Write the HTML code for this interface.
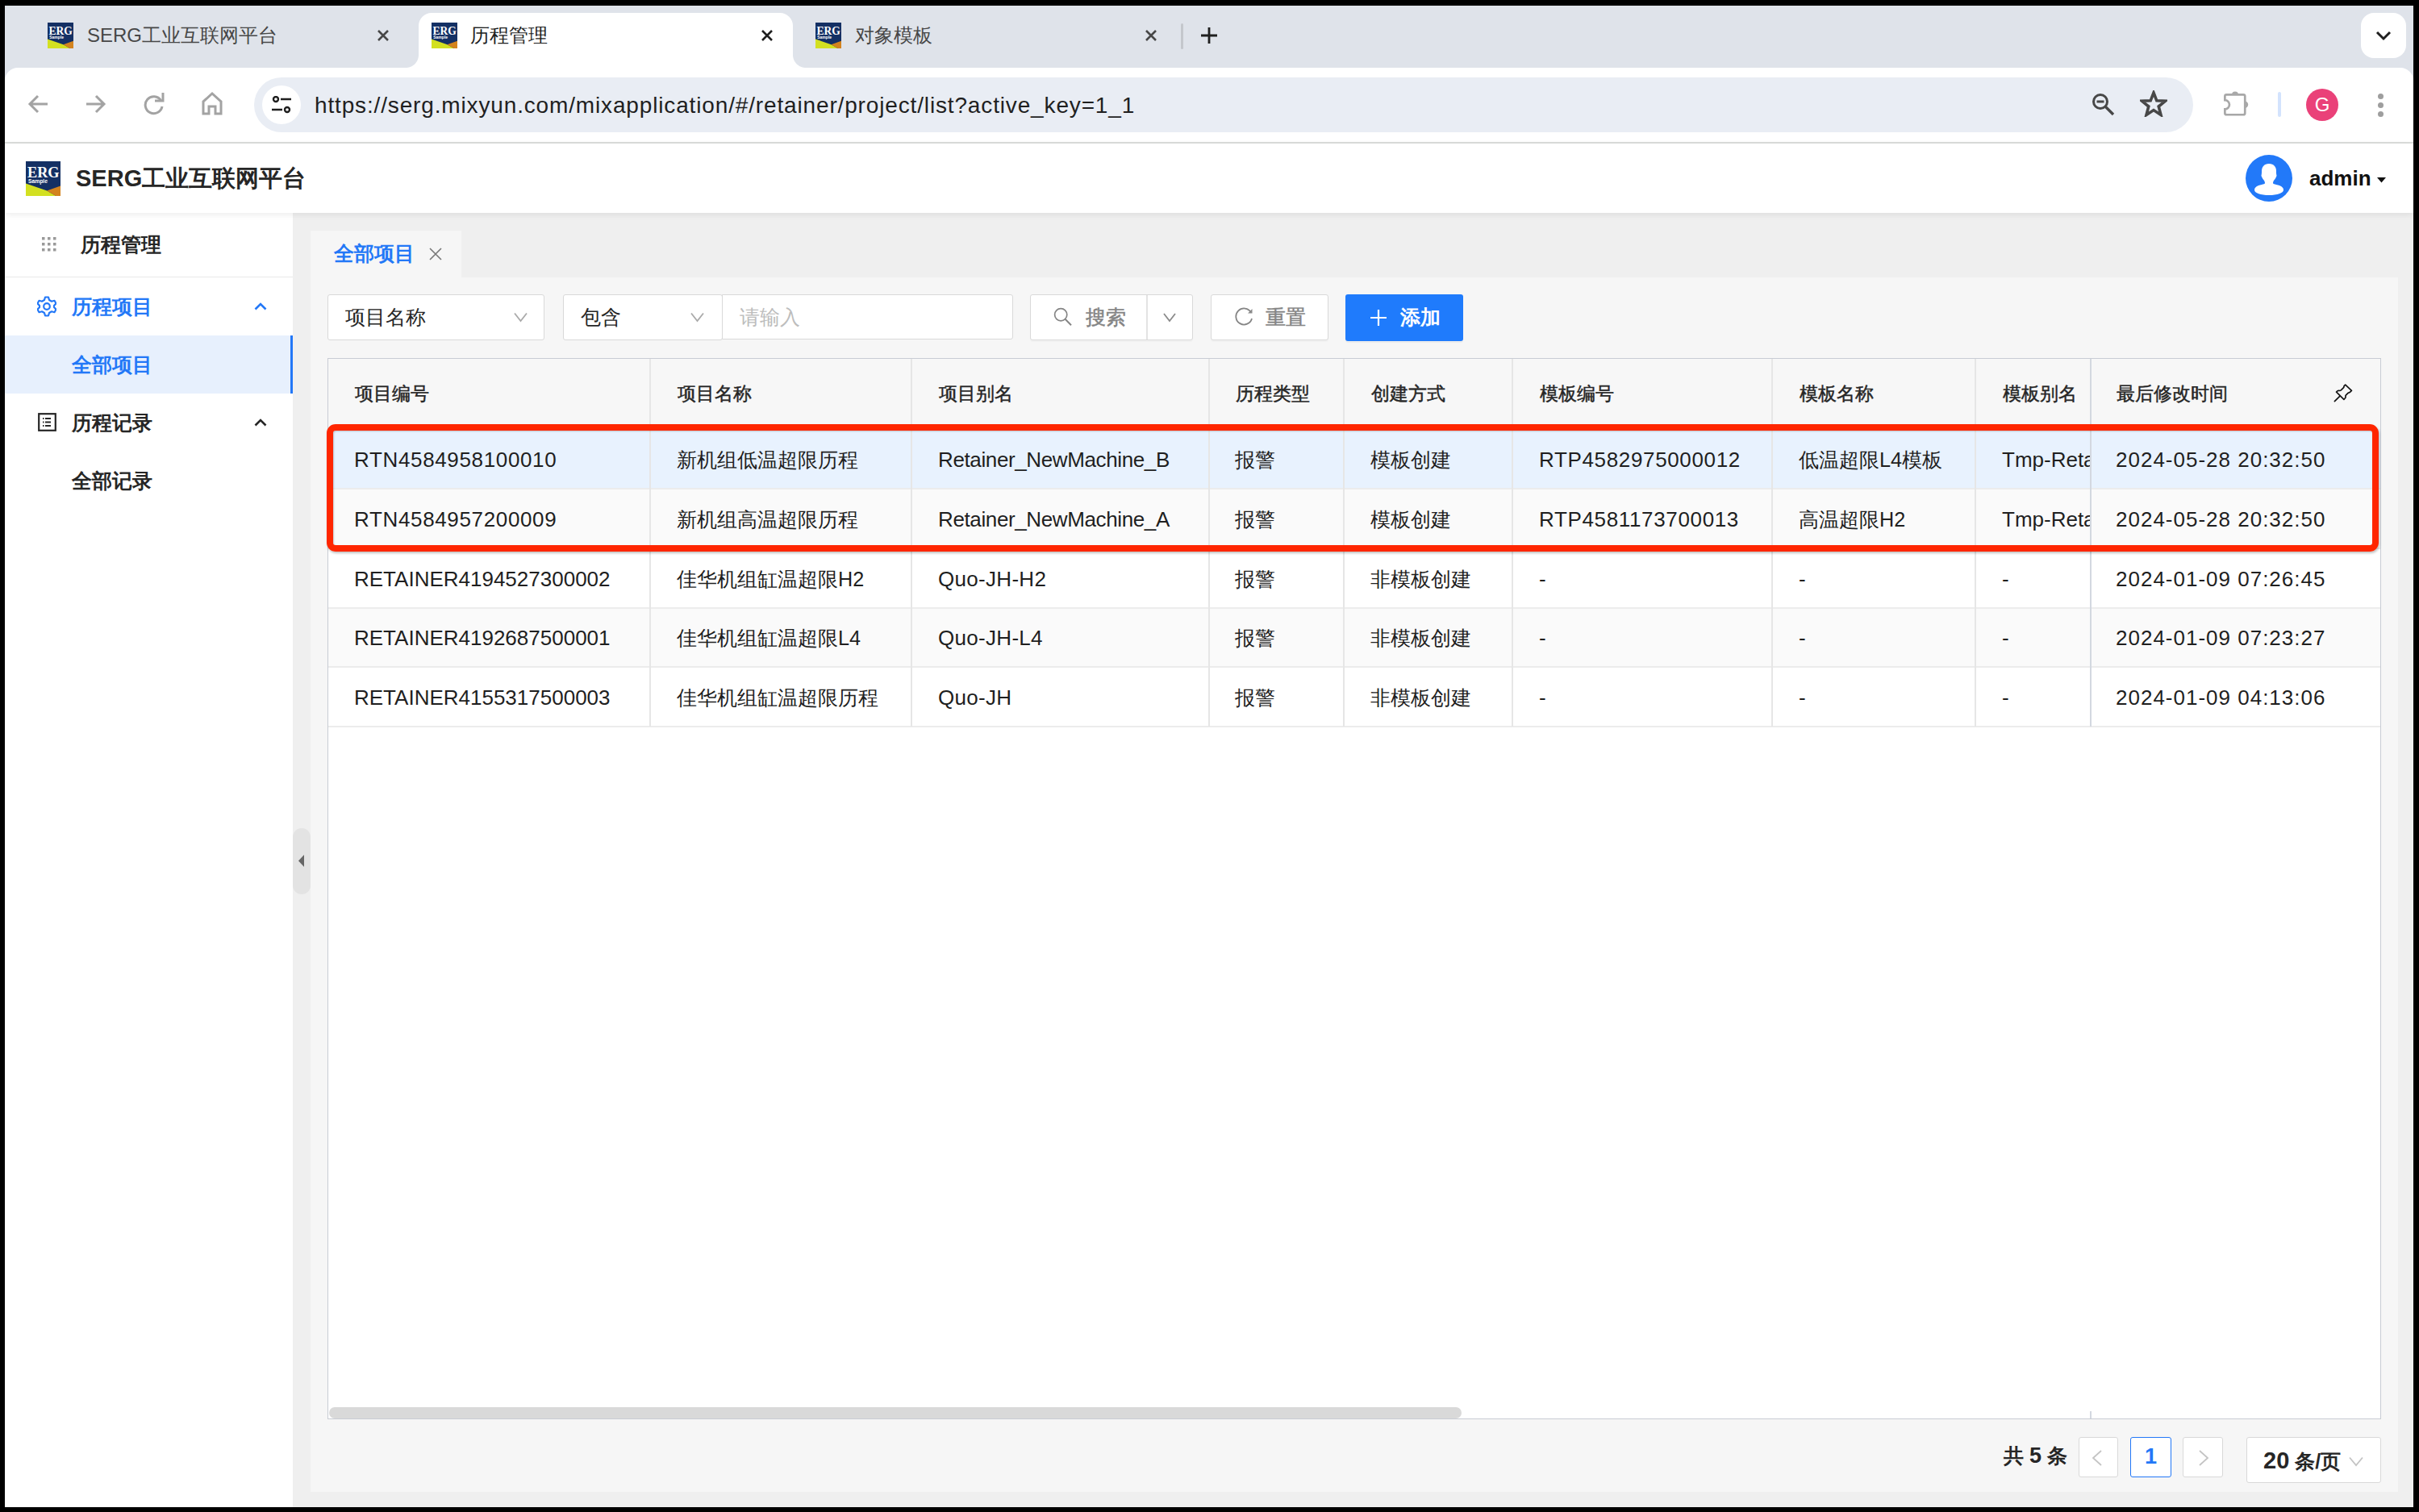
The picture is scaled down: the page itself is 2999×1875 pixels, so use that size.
<!DOCTYPE html>
<html><head><meta charset="utf-8">
<style>
*{box-sizing:border-box;margin:0;padding:0}
html,body{width:2999px;height:1875px;overflow:hidden;background:#000;font-family:"Liberation Sans",sans-serif;color:#262626}
.a{position:absolute}
.t{position:absolute;white-space:nowrap}
#win{position:absolute;left:6px;top:7px;width:2986px;height:1862px;overflow:hidden;background:#fff}
/* chrome */
#tabstrip{position:absolute;left:0;top:0;width:2986px;height:100px;background:#dfe3ea}
#toolbar{position:absolute;left:0;top:77px;width:2986px;height:92px;background:#fff;border-radius:16px 16px 0 0}
#sep{position:absolute;left:0;top:169px;width:2986px;height:2px;background:#dcdedc}
.fav{position:absolute;width:32px;height:32px}
.tabtitle{position:absolute;font-size:24px;line-height:32px;color:#474747}
#atab{position:absolute;left:513px;top:9px;width:464px;height:68px;background:#fff;border-radius:16px 16px 0 0}
#atab:before,#atab:after{content:"";position:absolute;bottom:0;width:16px;height:16px;background:radial-gradient(circle at 0 0,transparent 16px,#fff 16.5px)}
#atab:before{left:-16px;background:radial-gradient(circle at 0 0,transparent 15.5px,#fff 16.5px)}
#atab:after{right:-16px;background:radial-gradient(circle at 100% 0,transparent 15.5px,#fff 16.5px)}
#omni{position:absolute;left:309px;top:89px;width:2404px;height:68px;background:#e9edf4;border-radius:34px}
/* app */
#apphdr{position:absolute;left:0;top:171px;width:2986px;height:86px;background:#fff;z-index:3;box-shadow:0 2px 8px rgba(0,0,0,0.08)}
#side{position:absolute;left:0;top:257px;width:357px;height:1605px;background:#fff;z-index:2}
#main{position:absolute;left:357px;top:257px;width:2629px;height:1605px;background:#efefef}
.menu{position:absolute;font-size:25px;line-height:40px;font-weight:bold;color:#262626}
.blue{color:#2378f7}
#tabcard{position:absolute;left:379px;top:279px;width:187px;height:58px;background:#f6f6f6}
#card{position:absolute;left:379px;top:337px;width:2588px;height:1506px;background:#f6f6f6}
.box{position:absolute;background:#fff;border:1.5px solid #d9d9d9;border-radius:3px}
.btn{position:absolute;background:#fff;border:1.5px solid #d9d9d9;border-radius:3px;box-shadow:0 2px 0 rgba(0,0,0,0.02)}
#tbl{position:absolute;left:21px;top:100px;width:2546px;height:1316px;background:#fff;border:1.5px solid #c8ccd4;overflow:hidden}
.cell{position:absolute;white-space:nowrap;font-size:26px;line-height:40px;color:#1f1f1f}
.hd{position:absolute;white-space:nowrap;font-size:23px;line-height:40px;font-weight:normal;-webkit-text-stroke:0.45px #262626;color:#262626}
.vl{position:absolute;top:0;width:1.5px;background:#e6e6e6}
.hl{position:absolute;left:0;width:2546px;height:1.5px;background:#ececec}
.cj{font-size:25.2px}.rtn{letter-spacing:0.65px}.dt{letter-spacing:1px}.ali{letter-spacing:-0.38px}.quo{letter-spacing:0.3px}

</style></head><body>
<svg width="0" height="0" style="position:absolute">
<defs>
<symbol id="erg" viewBox="0 0 43 43">
<rect x="0" y="0" width="43" height="43" fill="#143064"/>
<polygon points="0,27.4 26.2,36.6 37.4,43 0,43" fill="#d3e021"/>
<polygon points="26.2,36.6 43,30.5 43,43 37.4,43" fill="#d3831e"/>
<text x="2" y="20.3" font-family="Liberation Serif" font-weight="bold" font-size="18.5" fill="#fff" textLength="39.5" lengthAdjust="spacingAndGlyphs">ERG</text>
<text x="3" y="27" font-family="Liberation Sans" font-weight="bold" font-size="7" fill="#fff" textLength="24" lengthAdjust="spacingAndGlyphs">Sample</text>
</symbol>
</defs>
</svg>
<div id="win">
  <div id="tabstrip"></div>
  <div id="atab"></div>
  <div id="toolbar"></div>
  <div id="sep"></div>
  <div id="omni"></div>

  <!-- tab 1 -->
  <svg class="fav" style="left:53px;top:21px" viewBox="0 0 43 43"><use href="#erg"/></svg>
  <div class="tabtitle" style="left:102px;top:21px">SERG工业互联网平台</div>
  <svg class="a" style="left:461px;top:29px" width="16" height="16" viewBox="0 0 16 16"><path d="M2 2L14 14M14 2L2 14" stroke="#474747" stroke-width="2.6"/></svg>
  <!-- tab 2 active -->
  <svg class="fav" style="left:529px;top:21px" viewBox="0 0 43 43"><use href="#erg"/></svg>
  <div class="tabtitle" style="left:577px;top:21px;color:#1f1f1f">历程管理</div>
  <svg class="a" style="left:937px;top:29px" width="16" height="16" viewBox="0 0 16 16"><path d="M2 2L14 14M14 2L2 14" stroke="#1f1f1f" stroke-width="2.6"/></svg>
  <!-- tab 3 -->
  <svg class="fav" style="left:1005px;top:21px" viewBox="0 0 43 43"><use href="#erg"/></svg>
  <div class="tabtitle" style="left:1054px;top:21px">对象模板</div>
  <svg class="a" style="left:1413px;top:29px" width="16" height="16" viewBox="0 0 16 16"><path d="M2 2L14 14M14 2L2 14" stroke="#474747" stroke-width="2.6"/></svg>
  <div class="a" style="left:1458px;top:22px;width:3px;height:32px;background:#c4c7cc;border-radius:2px"></div>
  <svg class="a" style="left:1483px;top:27px" width="20" height="20" viewBox="0 0 20 20"><path d="M10 0V20M0 10H20" stroke="#1f1f1f" stroke-width="2.8"/></svg>
  <!-- tab search dropdown -->
  <div class="a" style="left:2921px;top:9px;width:56px;height:56px;background:#fff;border-radius:16px"></div>
  <svg class="a" style="left:2939px;top:30px" width="20" height="14" viewBox="0 0 20 14"><path d="M2 3L10 11L18 3" stroke="#1f1f1f" stroke-width="3" fill="none"/></svg>

  <!-- nav icons -->
  <svg class="a" style="left:27px;top:108px" width="28" height="28" viewBox="0 0 28 28"><path d="M26 14H5M14 4L4 14L14 24" stroke="#a3a3a3" stroke-width="3" fill="none"/></svg>
  <svg class="a" style="left:99px;top:108px" width="28" height="28" viewBox="0 0 28 28"><path d="M2 14H23M14 4L24 14L14 24" stroke="#a3a3a3" stroke-width="3" fill="none"/></svg>
  <svg class="a" style="left:171px;top:108px" width="28" height="28" viewBox="0 0 28 28"><path d="M22.5 9.5A10.5 10.5 0 1 0 24 17" stroke="#a3a3a3" stroke-width="3" fill="none"/><path d="M15 10H25V0" stroke="#a3a3a3" stroke-width="3" fill="none"/></svg>
  <svg class="a" style="left:243px;top:106px" width="28" height="32" viewBox="0 0 28 32"><path d="M3 28V13L14 3L25 13V28H18V19H10V28Z" stroke="#a3a3a3" stroke-width="3" fill="none" stroke-linejoin="miter"/></svg>
  <!-- site info -->
  <div class="a" style="left:319px;top:99px;width:48px;height:48px;background:#fff;border-radius:50%"></div>
  <svg class="a" style="left:331px;top:112px" width="24" height="22" viewBox="0 0 24 22"><circle cx="5" cy="4" r="3" stroke="#1f1f1f" stroke-width="2.4" fill="none"/><path d="M11 4H24M0 17H13" stroke="#1f1f1f" stroke-width="2.6"/><circle cx="19" cy="17" r="3" stroke="#1f1f1f" stroke-width="2.4" fill="none"/></svg>
  <div class="t" style="left:384px;top:104px;font-size:28px;line-height:40px;color:#1f1f1f;letter-spacing:0.85px">https://serg.mixyun.com/mixapplication/#/retainer/project/list?active_key=1_1</div>
  <!-- right icons -->
  <svg class="a" style="left:2587px;top:108px" width="30" height="30" viewBox="0 0 30 30"><circle cx="11" cy="11" r="8.5" stroke="#474747" stroke-width="3" fill="none"/><path d="M17.5 17.5L27 27" stroke="#474747" stroke-width="3.4"/><path d="M6.5 11H15.5" stroke="#474747" stroke-width="3"/></svg>
  <svg class="a" style="left:2647px;top:105px" width="34" height="33" viewBox="0 0 34 33"><path d="M17 3L20.8 12.8L31.5 13.3L23.2 20L26 30.5L17 24.6L8 30.5L10.8 20L2.5 13.3L13.2 12.8Z" stroke="#474747" stroke-width="3.6" fill="none" stroke-linejoin="miter"/></svg>
  <svg class="a" style="left:2750px;top:104px" width="34" height="34" viewBox="0 0 34 34"><path d="M4.35 6.35H25.25Q27.25 6.35 27.25 8.35V29.25Q27.25 31.25 25.25 31.25H4.35Q2.35 31.25 2.35 29.25V24.4A5.6 5.6 0 0 0 2.35 13.2V8.35Q2.35 6.35 4.35 6.35Z" stroke="#a8a8a8" stroke-width="2.7" fill="none"/><path d="M11 6.5A4 4 0 0 1 19 6.5Z" fill="#a8a8a8"/><path d="M27 14.6A4.2 4.2 0 0 1 27 23Z" fill="#a8a8a8"/></svg>
  <div class="a" style="left:2818px;top:107px;width:4px;height:31px;background:#d3e3fd;border-radius:2px"></div>
  <div class="a" style="left:2853px;top:103px;width:40px;height:40px;background:#ea4179;border-radius:50%;color:#fff;font-size:24px;line-height:40px;text-align:center">G</div>
  <div class="a" style="left:2942px;top:109px;width:7px;height:7px;background:#9e9e9e;border-radius:50%"></div>
  <div class="a" style="left:2942px;top:120px;width:7px;height:7px;background:#9e9e9e;border-radius:50%"></div>
  <div class="a" style="left:2942px;top:131px;width:7px;height:7px;background:#9e9e9e;border-radius:50%"></div>
  <div id="apphdr"></div>
  <div id="side"></div>
  <div id="main"></div>

  <!-- app header content -->
  <svg class="a" style="left:26px;top:193px;z-index:4" width="43" height="43" viewBox="0 0 43 43"><use href="#erg"/></svg>
  <div class="t" style="left:88px;top:192px;z-index:4;font-size:29px;line-height:44px;font-weight:bold;color:#262626">SERG工业互联网平台</div>
  <div class="a" style="left:2778px;top:185px;width:58px;height:58px;border-radius:50%;background:#2279f9;z-index:4;overflow:hidden">
    <svg width="58" height="58" viewBox="0 0 58 58"><path d="M29 11C23 11 20 15 20 20C20 22 20 24 19.5 25.5C19.5 27 20.5 28 21.5 30C23 32 24 33 24 35C24 36 22 36.5 20 37C14 38 11 40.5 11 43.5C11 47.5 19 50 29 50C39 50 47 47.5 47 43.5C47 40.5 44 38 38 37C36 36.5 34 36 34 35C34 33 35 32 36.5 30C37.5 28 38.5 27 38.5 25.5C38 24 38 22 38 20C38 15 35 11 29 11Z" fill="#fff"/></svg>
  </div>
  <div class="t" style="left:2857px;top:194px;z-index:4;font-size:26px;line-height:40px;font-weight:bold;color:#111">admin</div>
  <svg class="a" style="left:2941px;top:213px;z-index:4" width="11" height="7" viewBox="0 0 11 7"><path d="M0 0H11L5.5 6.5Z" fill="#111"/></svg>
  <!-- sidebar content -->
  <div class="a" style="left:0;top:336px;width:357px;height:1px;background:#e9e9e9;z-index:3"></div>
  <svg class="a" style="left:46px;top:287px;z-index:3" width="18" height="18" viewBox="0 0 18 18" fill="#9a9a9a"><rect x="0" y="0" width="3.5" height="3.5"/><rect x="7" y="0" width="3.5" height="3.5"/><rect x="14" y="0" width="3.5" height="3.5"/><rect x="0" y="7" width="3.5" height="3.5"/><rect x="7" y="7" width="3.5" height="3.5"/><rect x="14" y="7" width="3.5" height="3.5"/><rect x="0" y="14" width="3.5" height="3.5"/><rect x="7" y="14" width="3.5" height="3.5"/><rect x="14" y="14" width="3.5" height="3.5"/></svg>
  <div class="menu" style="left:94px;top:276px;z-index:3">历程管理</div>
  <svg class="a" style="left:40px;top:360px;z-index:3" width="24" height="26" viewBox="0 0 24 26"><path d="M10 1.5H14L15 5L18 6.7L21.5 5.8L23.5 9.3L21 12V14L23.5 16.7L21.5 20.2L18 19.3L15 21L14 24.5H10L9 21L6 19.3L2.5 20.2L0.5 16.7L3 14V12L0.5 9.3L2.5 5.8L6 6.7L9 5Z" stroke="#2378f7" stroke-width="2.2" fill="none" stroke-linejoin="round"/><circle cx="12" cy="13" r="3.8" stroke="#2378f7" stroke-width="2.2" fill="none"/></svg>
  <div class="menu blue" style="left:83px;top:353px;z-index:3">历程项目</div>
  <svg class="a" style="left:309px;top:368px;z-index:3" width="16" height="10" viewBox="0 0 16 10"><path d="M1.5 8.5L8 2L14.5 8.5" stroke="#2378f7" stroke-width="2.6" fill="none"/></svg>
  <div class="a" style="left:0;top:409px;width:357px;height:72px;background:#e7f0fd;z-index:3"></div>
  <div class="a" style="left:354px;top:409px;width:3px;height:72px;background:#2378f7;z-index:3"></div>
  <div class="menu blue" style="left:83px;top:425px;z-index:3">全部项目</div>
  <svg class="a" style="left:41px;top:505px;z-index:3" width="23" height="23" viewBox="0 0 23 23"><rect x="1.2" y="1.2" width="20.6" height="20.6" stroke="#262626" stroke-width="2.2" fill="none"/><path d="M9 7H16M9 11.5H16M9 16H16" stroke="#262626" stroke-width="1.8"/><path d="M6 7H7.5M6 11.5H7.5M6 16H7.5" stroke="#262626" stroke-width="1.8"/></svg>
  <div class="menu" style="left:83px;top:497px;z-index:3">历程记录</div>
  <svg class="a" style="left:309px;top:512px;z-index:3" width="16" height="10" viewBox="0 0 16 10"><path d="M1.5 8.5L8 2L14.5 8.5" stroke="#262626" stroke-width="2.6" fill="none"/></svg>
  <div class="menu" style="left:83px;top:569px;z-index:3">全部记录</div>

  <div id="tabcard"></div>
  <div class="t" style="left:408px;top:287px;font-size:25px;line-height:40px;font-weight:bold;color:#2378f7">全部项目</div>
  <svg class="a" style="left:526px;top:300px" width="16" height="16" viewBox="0 0 16 16"><path d="M1 1L15 15M15 1L1 15" stroke="#777" stroke-width="1.6"/></svg>
  <div id="card">
    <div class="box" style="left:21px;top:21px;width:269px;height:57px"></div>
    <div class="t" style="left:43px;top:29px;font-size:25px;line-height:40px;color:#262626">项目名称</div>
    <svg class="a" style="left:252px;top:43px" width="17" height="13" viewBox="0 0 17 13"><path d="M1 1.5L8.5 11L16 1.5" stroke="#aaa" stroke-width="1.8" fill="none"/></svg>
    <div class="box" style="left:313px;top:21px;width:198px;height:57px"></div>
    <div class="t" style="left:335px;top:29px;font-size:25px;line-height:40px;color:#262626">包含</div>
    <svg class="a" style="left:471px;top:43px" width="17" height="13" viewBox="0 0 17 13"><path d="M1 1.5L8.5 11L16 1.5" stroke="#aaa" stroke-width="1.8" fill="none"/></svg>
    <div class="box" style="left:510px;top:21px;width:361px;height:56px;border-radius:0 3px 3px 0"></div>
    <div class="t" style="left:532px;top:29px;font-size:25px;line-height:40px;color:#bdbdbd">请输入</div>
    <div class="btn" style="left:892px;top:21px;width:202px;height:57px"></div>
    <div class="a" style="left:1036px;top:22px;width:1.5px;height:55px;background:#e3e3e3"></div>
    <svg class="a" style="left:921px;top:37px" width="23" height="24" viewBox="0 0 23 24"><circle cx="9.2" cy="9.2" r="7.6" stroke="#858585" stroke-width="1.7" fill="none"/><path d="M14.6 14.8L22 22.2" stroke="#858585" stroke-width="2"/></svg>
    <div class="t" style="left:961px;top:29px;font-size:25px;line-height:40px;color:#858585;-webkit-text-stroke:0.5px #858585">搜索</div>
    <svg class="a" style="left:1057px;top:44px" width="16" height="12" viewBox="0 0 16 12"><path d="M1 1L8 10L15 1" stroke="#8a8a8a" stroke-width="1.8" fill="none"/></svg>
    <div class="btn" style="left:1116px;top:21px;width:146px;height:57px"></div>
    <svg class="a" style="left:1145px;top:37px" width="24" height="24" viewBox="0 0 24 24"><path d="M21 6.5A10 10 0 1 0 22 14" stroke="#858585" stroke-width="1.8" fill="none"/><path d="M22.5 1V8H15.5" stroke="none" fill="none"/><path d="M17 7.5L22.5 7.5L22.5 2Z" fill="#8a8a8a"/></svg>
    <div class="t" style="left:1184px;top:29px;font-size:25px;line-height:40px;color:#858585;-webkit-text-stroke:0.5px #858585">重置</div>
    <div class="a" style="left:1283px;top:21px;width:146px;height:58px;background:#1f7bfc;border-radius:3px;box-shadow:0 2px 0 rgba(0,0,0,0.04)"></div>
    <svg class="a" style="left:1314px;top:40px" width="20" height="20" viewBox="0 0 20 20"><path d="M10 0V20M0 10H20" stroke="#fff" stroke-width="2.2"/></svg>
    <div class="t" style="left:1351px;top:29px;font-size:25px;line-height:40px;font-weight:bold;color:#fff">添加</div>
    <div id="tbl"><div class="a" style="left:0;top:0;width:2546px;height:87px;background:#f7f7f7"></div>
<div class="a" style="left:0;top:87px;width:2546px;height:74px;background:#e8f2fe"></div>
<div class="a" style="left:0;top:161px;width:2546px;height:74px;background:#fafafa"></div>
<div class="a" style="left:0;top:235px;width:2546px;height:74px;background:#ffffff"></div>
<div class="a" style="left:0;top:309px;width:2546px;height:73px;background:#fafafa"></div>
<div class="a" style="left:0;top:382px;width:2546px;height:74px;background:#ffffff"></div>
<div class="hl" style="top:160px"></div>
<div class="hl" style="top:234px"></div>
<div class="hl" style="top:308px"></div>
<div class="hl" style="top:381px"></div>
<div class="hl" style="top:455px"></div>
<div class="vl" style="left:398px;height:456px"></div>
<div class="vl" style="left:722px;height:456px"></div>
<div class="vl" style="left:1091px;height:456px"></div>
<div class="vl" style="left:1258px;height:456px"></div>
<div class="vl" style="left:1467px;height:456px"></div>
<div class="vl" style="left:1789px;height:456px"></div>
<div class="vl" style="left:2041px;height:456px"></div>
<div class="vl" style="left:2184px;height:456px;background:#d3d8e0"></div>
<div class="hd" style="left:33px;top:23px">项目编号</div>
<div class="hd" style="left:433px;top:23px">项目名称</div>
<div class="hd" style="left:757px;top:23px">项目别名</div>
<div class="hd" style="left:1125px;top:23px">历程类型</div>
<div class="hd" style="left:1293px;top:23px">创建方式</div>
<div class="hd" style="left:1502px;top:23px">模板编号</div>
<div class="hd" style="left:1824px;top:23px">模板名称</div>
<div class="hd" style="left:2076px;top:23px">模板别名</div>
<div class="hd" style="left:2217px;top:23px">最后修改时间</div>
<div class="cell rtn" style="left:32px;top:105px;">RTN4584958100010</div>
<div class="cell  cj" style="left:432px;top:105px;">新机组低温超限历程</div>
<div class="cell ali" style="left:756px;top:105px;">Retainer_NewMachine_B</div>
<div class="cell  cj" style="left:1124px;top:105px;">报警</div>
<div class="cell  cj" style="left:1292px;top:105px;">模板创建</div>
<div class="cell rtn" style="left:1501px;top:105px;">RTP4582975000012</div>
<div class="cell  cj" style="left:1823px;top:105px;">低温超限L4模板</div>
<div class="cell " style="left:2075px;top:105px;width:109px;overflow:hidden;">Tmp-Reta</div>
<div class="cell dt" style="left:2216px;top:105px;">2024-05-28 20:32:50</div>
<div class="cell rtn" style="left:32px;top:179px;">RTN4584957200009</div>
<div class="cell  cj" style="left:432px;top:179px;">新机组高温超限历程</div>
<div class="cell ali" style="left:756px;top:179px;">Retainer_NewMachine_A</div>
<div class="cell  cj" style="left:1124px;top:179px;">报警</div>
<div class="cell  cj" style="left:1292px;top:179px;">模板创建</div>
<div class="cell rtn" style="left:1501px;top:179px;">RTP4581173700013</div>
<div class="cell  cj" style="left:1823px;top:179px;">高温超限H2</div>
<div class="cell " style="left:2075px;top:179px;width:109px;overflow:hidden;">Tmp-Reta</div>
<div class="cell dt" style="left:2216px;top:179px;">2024-05-28 20:32:50</div>
<div class="cell " style="left:32px;top:253px;">RETAINER4194527300002</div>
<div class="cell  cj" style="left:432px;top:253px;">佳华机组缸温超限H2</div>
<div class="cell quo" style="left:756px;top:253px;">Quo-JH-H2</div>
<div class="cell  cj" style="left:1124px;top:253px;">报警</div>
<div class="cell  cj" style="left:1292px;top:253px;">非模板创建</div>
<div class="cell " style="left:1501px;top:253px;">-</div>
<div class="cell " style="left:1823px;top:253px;">-</div>
<div class="cell " style="left:2075px;top:253px;width:109px;overflow:hidden;">-</div>
<div class="cell dt" style="left:2216px;top:253px;">2024-01-09 07:26:45</div>
<div class="cell " style="left:32px;top:326px;">RETAINER4192687500001</div>
<div class="cell  cj" style="left:432px;top:326px;">佳华机组缸温超限L4</div>
<div class="cell quo" style="left:756px;top:326px;">Quo-JH-L4</div>
<div class="cell  cj" style="left:1124px;top:326px;">报警</div>
<div class="cell  cj" style="left:1292px;top:326px;">非模板创建</div>
<div class="cell " style="left:1501px;top:326px;">-</div>
<div class="cell " style="left:1823px;top:326px;">-</div>
<div class="cell " style="left:2075px;top:326px;width:109px;overflow:hidden;">-</div>
<div class="cell dt" style="left:2216px;top:326px;">2024-01-09 07:23:27</div>
<div class="cell " style="left:32px;top:400px;">RETAINER4155317500003</div>
<div class="cell  cj" style="left:432px;top:400px;">佳华机组缸温超限历程</div>
<div class="cell quo" style="left:756px;top:400px;">Quo-JH</div>
<div class="cell  cj" style="left:1124px;top:400px;">报警</div>
<div class="cell  cj" style="left:1292px;top:400px;">非模板创建</div>
<div class="cell " style="left:1501px;top:400px;">-</div>
<div class="cell " style="left:1823px;top:400px;">-</div>
<div class="cell " style="left:2075px;top:400px;width:109px;overflow:hidden;">-</div>
<div class="cell dt" style="left:2216px;top:400px;">2024-01-09 04:13:06</div>
<svg class="a" style="left:2486px;top:31px" width="26" height="26" viewBox="0 0 26 26"><path d="M14.7 1.1L22.4 8.4L20.9 9.9Q20.3 10.6 19.2 10.8Q18.5 10.9 17.8 11.6L15.3 14.1Q14.8 14.6 15 15.6Q15.2 16.6 14.6 17.5L12.9 19.3L3.6 10.2L5.2 8.7Q5.9 8.1 7.1 8.4Q8.3 8.7 9.3 7.9L12.3 4.9Q13 4.2 12.9 3.6Q12.9 2.9 13.4 2.4Z" stroke="#141414" stroke-width="1.7" fill="none" stroke-linejoin="round"/><path d="M8 15.2L1.4 21.7" stroke="#141414" stroke-width="1.7" stroke-linecap="round"/></svg>
<div class="a" style="left:1px;top:1300px;width:1404px;height:14px;border-radius:7px;background:#d9d9d9"></div>
<div class="vl" style="left:2184px;top:1305px;height:12px;background:#d3d8e0"></div></div>
    <div class="t" style="left:2099px;top:1441px;font-size:25px;line-height:40px;font-weight:bold;color:#262626">共 <span style="font-size:27px">5</span> 条</div>
    <div class="box" style="left:2192px;top:1438px;width:49px;height:50px"></div>
    <svg class="a" style="left:2208px;top:1454px" width="14" height="20" viewBox="0 0 14 20"><path d="M12 1L2 10L12 19" stroke="#c4c4c4" stroke-width="1.8" fill="none"/></svg>
    <div class="box" style="left:2256px;top:1438px;width:51px;height:50px;border-color:#2378f7;color:#2378f7;font-size:27px;font-weight:bold;line-height:47px;text-align:center">1</div>
    <div class="box" style="left:2321px;top:1438px;width:50px;height:50px"></div>
    <svg class="a" style="left:2340px;top:1454px" width="14" height="20" viewBox="0 0 14 20"><path d="M2 1L12 10L2 19" stroke="#c4c4c4" stroke-width="1.8" fill="none"/></svg>
    <div class="box" style="left:2400px;top:1438px;width:167px;height:57px"></div>
    <div class="t" style="left:2421px;top:1447px;font-size:25px;line-height:40px;font-weight:bold;color:#262626"><span style="font-size:29px">20</span> 条/页</div>
    <svg class="a" style="left:2527px;top:1462px" width="18" height="13" viewBox="0 0 18 13"><path d="M1 1.5L9 11L17 1.5" stroke="#c4c4c4" stroke-width="1.8" fill="none"/></svg>
  </div>
  <!-- red highlight -->
  <div class="a" style="left:399px;top:519px;width:2544px;height:158px;border:8px solid #ff2600;border-radius:11px;box-shadow:1px 2px 3px rgba(0,0,0,0.25), inset 1px 1px 2px rgba(0,0,0,0.2)"></div>
  <!-- collapse handle -->
  <div class="a" style="left:357px;top:1020px;width:22px;height:82px;border-radius:11px;background:#e3e3e3;z-index:3"></div>
  <svg class="a" style="left:364px;top:1053px;z-index:3" width="7" height="15" viewBox="0 0 7 15"><path d="M7 0V15L0 7.5Z" fill="#666"/></svg>
</div>
</body></html>
